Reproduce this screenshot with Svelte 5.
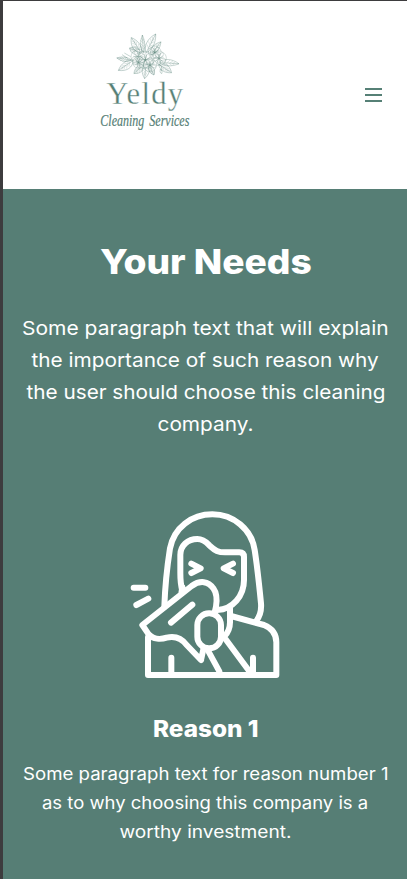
<script>
  const intro = [
    { text: 'Some paragraph text that will explain', width: 367 },
    { text: 'the importance of such reason why', width: 347 },
    { text: 'the user should choose this cleaning', width: 359 },
    { text: 'company.', width: 96 }
  ];
  const reason = [
    { text: 'Some paragraph text for reason number 1', width: 366 },
    { text: 'as to why choosing this company is a', width: 326 },
    { text: 'worthy investment.', width: 172 }
  ];
  // x, y, length, angle, half-width
  const leaves = [
    [160, 84, 54, -93, 9], [168, 84, 64, -63, 16], [154, 84, 55, -123, 17],
    [150, 82, 34, -158, 15], [124, 105, 44, -172, 9], [130, 106, 54, 146, 17],
    [206, 112, 61, 4, 14], [206, 118, 46, 33, 16], [168, 114, 47, 95, 16],
    [160, 120, 38, 138, 14], [182, 90, 50, -52, 14], [176, 120, 34, 62, 12]
  ];
  const blooms = [[146, 96, 23], [166, 105, 26], [194, 82, 19], [207, 100, 22], [180, 120, 20], [146, 112, 18]];

  function fit(node, width) {
    node.style.transform = `scaleX(${width / node.offsetWidth})`;
  }
</script>

<main>
  <header>
    <svg class="logo" viewBox="0 0 330 345" role="img" aria-label="Yeldy Cleaning Services">
      <g class="sketch">
        {#each leaves as [x, y, l, a, w]}
          <g transform="translate({x} {y}) rotate({a})">
            <path class="leaf" d="M0 0 C{l * 0.25} {-w} {l * 0.65} {-w} {l} 0 C{l * 0.65} {w * 0.8} {l * 0.25} {w * 0.8} 0 0 M0 0 H{l}" />
            <path class="vein" d="M{l * 0.25} 0 l8 -8 M{l * 0.4} 0 l9 -9 M{l * 0.55} 0 l9 -7 M{l * 0.7} 0 l7 -4 M{l * 0.2} 0 l8 7 M{l * 0.34} 0 l9 8 M{l * 0.5} 0 l9 6 M{l * 0.65} 0 l7 4" />
          </g>
        {/each}
        {#each blooms as [x, y, r]}
          <g transform="translate({x} {y})">
            {#each [0, 72, 144, 216, 288] as a}
              <path class="petal" transform="rotate({a})" d="M0 0 C{-r} {-r * 0.4} {-r * 0.6} {-r} 0 {-r} C{r * 0.6} {-r} {r} {-r * 0.4} 0 0 M0 0 L-3 {-r * 0.7} M0 0 L4 {-r * 0.6}" />
            {/each}
          </g>
        {/each}
        <path class="leaf" d="M202 115 Q218 120 215 138 M211 132 q-4 12 4 14 q5 -5 -4 -14 M112 99 L96 89 M122 95 L103 84" />
      </g>
      <text class="brand" x="49" y="236" textLength="230" lengthAdjust="spacing">Yeldy</text>
      <text class="tagline" x="31" y="302" textLength="267" lengthAdjust="spacingAndGlyphs">Cleaning Services</text>
    </svg>
    <button aria-label="Menu"><i></i><i></i><i></i></button>
  </header>

  <section>
    <h1><span use:fit={212}>Your Needs</span></h1>
    <p class="intro">
      {#each intro as line}<span use:fit={line.width}>{line.text}</span>{/each}
    </p>
    <svg class="sneeze" viewBox="0 0 510 570" aria-hidden="true">
      <path d="M133 320 C135 260 143 190 150 145 C162 83 215 43 277 43 C340 43 395 88 404 150 C412 200 418 260 423 310 C425 335 418 352 408 364" />
      <path d="M187 272 C182 255 181 240 181 220 V165 C181 137 203 117 232 117 C253 117 262 130 270 138 C285 152 295 157 315 157 H358 Q372 157 372 171 V240 C372 288 338 328 292 330" />
      <path d="M214 191 L242 205 L214 219 M339 191 L311 205 L339 219" />
      <path d="M41 263 H76 M85 296 L49 315" />
      <path d="M243 480 L200 435 C185 415 165 407 140 413 C122 419 100 418 86 403 L67 375 L215 258 C240 240 265 243 280 265 C293 283 291 302 288 320 L283 342 M187 262 L184 280 M243 480 L250 448" />
      <path d="M153 368 L217 314" />
      <rect x="232" y="340" width="71" height="105" rx="35" />
      <path d="M330 323 V367 C330 388 323 400 312 411 L388 514 M262 448 L298 514" />
      <path d="M333 348 L432 375 C457 385 469 402 469 427 V525 H84 V412 M154 473 V520 M399 473 V520" />
    </svg>
    <h2><span use:fit={106}>Reason 1</span></h2>
    <p class="reason">
      {#each reason as line}<span use:fit={line.width}>{line.text}</span>{/each}
    </p>
  </section>
</main>

<style>
  :global(body) { margin: 0; }
  main {
    box-sizing: border-box;
    height: 879px;
    overflow: hidden;
    border-left: 3px solid #3d3c3e;
    border-top: 1px solid #3d3c3e;
    background: #fff;
    font-family: Inter, "Liberation Sans", sans-serif;
  }
  header {
    box-sizing: border-box;
    height: 188px;
    padding: 24px 25px 0 87px;
    display: flex;
    justify-content: space-between;
    align-items: flex-start;
  }
  .logo { width: 110px; height: 115px; display: block; overflow: visible; }
  .sketch { fill: none; stroke: #568076; }
  .leaf { stroke-width: 1.6; opacity: .6; }
  .vein { stroke-width: 1.1; opacity: .5; }
  .petal { fill: #fff; fill-opacity: .35; stroke-width: 1.3; opacity: .55; }
  .brand { font: 92px "Liberation Serif", serif; fill: #568076; stroke: #fff; stroke-width: 1; }
  .tagline { font: italic 49px "Liberation Serif", serif; word-spacing: 8px; fill: #568076; stroke: #568076; stroke-width: .6; }
  button {
    margin: 63px 0 0;
    padding: 0;
    border: 0;
    background: none;
    display: flex;
    flex-direction: column;
    gap: 4px;
  }
  i { width: 17px; height: 2px; background: #568076; }
  section {
    height: 690px;
    background: #567e75;
    color: #fff;
    display: flex;
    flex-direction: column;
    align-items: center;
  }
  h1, h2, p { margin: 0; padding-left: 1px; display: flex; flex-direction: column; align-items: center; white-space: nowrap; }
  h1 { margin-top: 51px; font-size: 34px; font-weight: 800; line-height: 44px; }
  h2 { margin-top: 24px; font-size: 22.5px; font-weight: 800; line-height: 30px; }
  .intro { margin-top: 28px; font-size: 19.3px; line-height: 32px; }
  .reason { margin-top: 16px; font-size: 17px; line-height: 29px; }
  .sneeze {
    width: 170px;
    height: 190px;
    margin-top: 60px;
    fill: none;
    stroke: #fff;
    stroke-width: 18;
    stroke-linecap: round;
    stroke-linejoin: round;
  }
</style>
